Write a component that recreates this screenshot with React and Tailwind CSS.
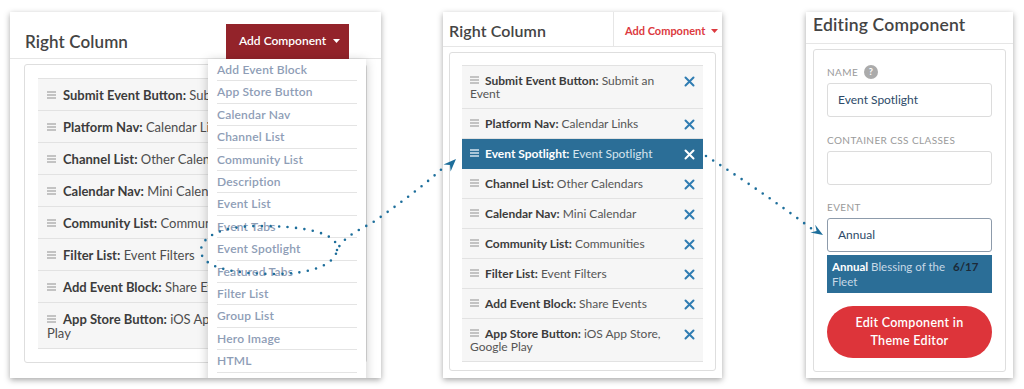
import React from "react";

function Burger({ color = "#b3b3b3" }) {
  return (
    <svg width="9" height="8" viewBox="0 0 9 8" className="block">
      <path d="M0 1h9M0 4h9M0 7h9" stroke={color} strokeWidth="1.3" />
    </svg>
  );
}

function XIcon({ color = "#2f7cb2" }) {
  return (
    <svg width="11" height="11" viewBox="0 0 11 11" className="block">
      <path d="M1.5 1.5l8 8M9.5 1.5l-8 8" stroke={color} strokeWidth="2" strokeLinecap="round" />
    </svg>
  );
}

function Caret({ color }) {
  return (
    <svg width="7" height="4" viewBox="0 0 7 4" className="inline-block shrink-0">
      <path d="M0 0h7L3.5 4z" fill={color} />
    </svg>
  );
}

const leftRows = [
  ["Submit Event Button", "Submit an Event"],
  ["Platform Nav", "Calendar Links"],
  ["Channel List", "Other Calendars"],
  ["Calendar Nav", "Mini Calendar"],
  ["Community List", "Communities"],
  ["Filter List", "Event Filters"],
  ["Add Event Block", "Share Events"],
  ["App Store Button", "iOS App Store, Google Play"],
];

const midRows = [
  ["Submit Event Button", "Submit an Event"],
  ["Platform Nav", "Calendar Links"],
  ["Event Spotlight", "Event Spotlight", true],
  ["Channel List", "Other Calendars"],
  ["Calendar Nav", "Mini Calendar"],
  ["Community List", "Communities"],
  ["Filter List", "Event Filters"],
  ["Add Event Block", "Share Events"],
  ["App Store Button", "iOS App Store, Google Play"],
];

const menuItems = [
  "Add Event Block",
  "App Store Button",
  "Calendar Nav",
  "Channel List",
  "Community List",
  "Description",
  "Event List",
  "Event Tabs",
  "Event Spotlight",
  "Featured Tabs",
  "Filter List",
  "Group List",
  "Hero Image",
  "HTML",
  "Image",
];

function LeftPanel() {
  return (
    <div className="relative w-[371px] h-[366px] shrink-0 bg-white shadow-[0_2px_6px_rgba(0,0,0,0.35)] overflow-hidden">
      <div className="h-[47px] pt-[12px] flex items-center justify-between border-b border-[#e6e6e6]">
        <div className="pl-[15px] pt-[1px] text-[17px] font-semibold text-[#444] tracking-[0.1px]">Right Column</div>
        <div className="mr-[32px] h-[35px] w-[123px] bg-[#93232a] text-white text-[12px] font-semibold flex items-center pl-[13px] gap-[7px] whitespace-nowrap">
          Add Component <Caret color="#fff" />
        </div>
      </div>
      <div className="px-[14px] pt-[5px]">
        <div className="h-[299px] border border-[#dedede] rounded-[3px] p-[13px]">
          <div className="border-t border-[#e2e2e2]">
            {leftRows.map(([a, b]) => (
              <div key={a} className="flex bg-[#f6f6f6] border-b border-[#e2e2e2] pl-[9px] pt-[9px] pb-[8px] text-[13px] leading-[14px]">
                <div className="w-[262px] text-[#4d4d4d]">
                  <span className="inline-flex w-[9px] mr-[7px] align-[1px]"><Burger /></span>
                  <b className="font-bold text-[#3c3c3c]">{a}:</b> {b}
                </div>
              </div>
            ))}
          </div>
        </div>
      </div>
      <div className="absolute left-[198px] top-[47px] w-[158px] h-[340px] bg-white shadow-[0_2px_10px_rgba(0,0,0,0.22)] px-[9px]">
        {menuItems.map((m) => (
          <div key={m} className="border-b border-[#e4e4e4] leading-[21.4px] text-[12px] font-semibold text-[#8e9db6] tracking-[0.2px] whitespace-nowrap">
            {m}
          </div>
        ))}
      </div>
    </div>
  );
}

function MiddlePanel() {
  return (
    <div className="w-[279px] h-[366px] shrink-0 bg-white shadow-[0_2px_6px_rgba(0,0,0,0.35)] ml-[62px]">
      <div className="h-[35px] flex border-b border-[#e6e6e6]">
        <div className="w-[171px] shrink-0 pl-[6px] pt-[4px] flex items-center text-[16px] font-semibold text-[#444] tracking-[0.1px] border-r border-[#e6e6e6]">
          Right Column
        </div>
        <div className="flex-1 pl-[11px] pt-[4px] flex items-center gap-[6px] text-[11px] font-bold text-[#dc3a40] whitespace-nowrap">
          Add Component <Caret color="#dc3a40" />
        </div>
      </div>
      <div className="px-[6px] pt-[5px]">
        <div className="h-[319px] border border-[#dedede] rounded-[3px] px-[12px] pt-[12px]">
          <div className="border-t border-[#e2e2e2]">
            {midRows.map(([a, b, sel]) => (
              <div
                key={a}
                className={
                  sel
                    ? "flex items-start justify-between bg-[#2b6e97] border-b border-[#2b6e97] pl-[8px] pr-[8px] py-[8px] text-[12px] leading-[13px]"
                    : "flex items-start justify-between bg-[#f6f6f6] border-b border-[#e2e2e2] pl-[8px] pr-[8px] py-[8px] text-[12px] leading-[13px]"
                }
              >
                <div className={sel ? "w-[209px] text-[#d6e4ee]" : "w-[209px] text-[#555]"}>
                  <span className="inline-flex w-[9px] mr-[6px] align-[1px]">
                    <Burger color={sel ? "#d6e4ee" : "#b3b3b3"} />
                  </span>
                  <b className={sel ? "font-bold text-white" : "font-bold text-[#3c3c3c]"}>{a}:</b> {b}
                </div>
                <div className="pt-[2px]">
                  <XIcon color={sel ? "#ffffff" : "#2f7cb2"} />
                </div>
              </div>
            ))}
          </div>
        </div>
      </div>
    </div>
  );
}

function Label({ children }) {
  return <div className="h-[14px] leading-[14px] text-[10px] text-[#9a9a9a] tracking-[0.4px] flex items-center gap-[6px]">{children}</div>;
}

function RightPanel() {
  return (
    <div className="w-[207px] h-[366px] shrink-0 bg-white shadow-[0_2px_6px_rgba(0,0,0,0.35)] ml-[84px]">
      <div className="h-[32px] border-b border-[#e6e6e6] pl-[7px] leading-[26px] text-[17.5px] font-semibold text-[#444] tracking-[0.2px]">
        Editing Component
      </div>
      <div className="px-[7px] pt-[5px]">
        <div className="h-[323px] border border-[#dedede] rounded-[3px] px-[13px] pt-[15px]">
          <Label>
            NAME
            <span className="w-[14px] h-[14px] rounded-full bg-[#ababab] text-white text-[9px] font-bold flex items-center justify-center">?</span>
          </Label>
          <div className="mt-[4px] h-[34px] border border-[#dcdcdc] rounded-[3px] pl-[10px] flex items-center text-[12px] text-[#2d4a69]">
            Event Spotlight
          </div>
          <div className="mt-[16px]">
            <Label>CONTAINER CSS CLASSES</Label>
          </div>
          <div className="mt-[4px] h-[34px] border border-[#dcdcdc] rounded-[3px]"></div>
          <div className="mt-[15px]">
            <Label>EVENT</Label>
          </div>
          <div className="mt-[4px] h-[34px] border border-[#8d9bab] rounded-[3px] pl-[10px] flex items-center text-[12px] text-[#2d4a69]">
            Annual
          </div>
          <div className="mt-[3px] bg-[#2b6e97] flex pl-[5px] py-[4px] leading-[15px] text-[11.5px]">
            <div className="w-[121px] text-[#c7d8e6]">
              <b className="font-bold text-white">Annual</b> Blessing of the Fleet
            </div>
            <div className="font-bold text-[#1c2a38]">6/17</div>
          </div>
          <div className="mt-[13px] h-[52px] rounded-full bg-[#dd343a] flex items-center justify-center text-center text-white text-[12.5px] font-semibold leading-[18px] tracking-[0.3px]">
            Edit Component in
            <br />
            Theme Editor
          </div>
        </div>
      </div>
    </div>
  );
}

function Arrows() {
  return (
    <svg className="absolute inset-0 pointer-events-none" width="1024" height="389" viewBox="0 0 1024 389">
      <g fill="none" stroke="#1d6e9b" strokeWidth="2.6" strokeLinecap="round" strokeDasharray="0 8.5">
        <path d="M337 250 C340 232 300 226 260 226 C225 226 200 235 201 252 C203 268 235 274 275 274 C310 274 335 265 337 250 C345 235 360 230 375 221 C400 203 425 185 446 165" />
        <path d="M706 156 Q760 190 812 229" />
      </g>
      <path d="M456 159 L450.6 171.5 L450 165 L443.5 164.4 Z" fill="#1d6e9b" />
      <path d="M823 235 L815.2 224.8 L816.6 231 L810.4 232.4 Z" fill="#1d6e9b" />
    </svg>
  );
}

export default function App() {
  return (
    <div className="relative w-[1024px] h-[389px] bg-white overflow-hidden font-[family-name:Lato,sans-serif]">
      <div className="flex items-start pt-[12px] pl-[10px]">
        <LeftPanel />
        <MiddlePanel />
        <RightPanel />
      </div>
      <Arrows />
    </div>
  );
}
